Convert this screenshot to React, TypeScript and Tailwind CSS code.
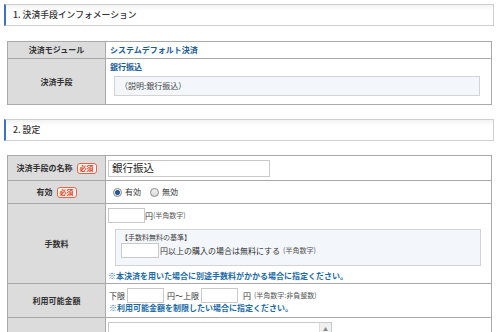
const jp = { fontFamily: '"Noto Sans CJK JP", "Liberation Sans", sans-serif' }

function SectionTitle({ children }: { children: React.ReactNode }) {
  return (
    <div className="ml-[4px] mr-[6px] h-[22px] border border-[#cfcfcf] border-l-[2px] border-l-[#3b74c4] bg-gradient-to-b from-[#f2f2f2] to-white to-[30%] flex items-center pl-[7px] text-[8.8px] text-[#333] font-medium">
      {children}
    </div>
  )
}

function Badge() {
  return (
    <span className="inline-flex items-center h-[11px] px-[2px] ml-[4px] rounded-[3px] border border-[#e0684a] bg-[#fff3ee] text-[#e0452a] text-[7px] leading-none">
      必須
    </span>
  )
}

function Th({ children, h }: { children: React.ReactNode; h: string }) {
  return (
    <td className={`w-[98px] ${h} bg-[#dcdcdc] border border-[#a9a9a9] text-center text-[8px] font-bold text-[#333] align-middle`}>
      {children}
    </td>
  )
}

function Radio({ on }: { on?: boolean }) {
  return (
    <span className="inline-flex items-center justify-center w-[9px] h-[9px] rounded-full border border-[#8a8a8a] bg-gradient-to-b from-[#f4f4f4] to-[#d8d8d8]">
      {on && <span className="w-[5px] h-[5px] rounded-full bg-[#1f5fa8] border border-[#0c3f7a]" />}
    </span>
  )
}

function SmallInput({ w }: { w: string }) {
  return <span className={`inline-block ${w} h-[15px] border border-[#c9c9c9] bg-white align-middle`} />
}

export default function App() {
  return (
    <div className="w-[500px] h-[332px] overflow-hidden bg-white pt-[4px] text-[#333]" style={jp}>
      <SectionTitle>1. 決済手段インフォメーション</SectionTitle>

      <table className="ml-[7px] mt-[15px] w-[485px] border-collapse">
        <tbody>
          <tr>
            <Th h="h-[17px]">決済モジュール</Th>
            <td className="border border-[#a9a9a9] pl-[4px] text-[8px] font-bold text-[#1a5c98]">システムデフォルト決済</td>
          </tr>
          <tr>
            <Th h="h-[46px]">決済手段</Th>
            <td className="border border-[#a9a9a9] px-[4px] align-top pt-[3px]">
              <div className="text-[8px] font-bold text-[#1a5c98] leading-[10px]">銀行振込</div>
              <div className="mt-[4px] ml-[4px] mr-[7px] h-[20px] border border-[#d3d3d3] bg-[#f3f7fb] flex items-center pl-[5px] text-[8px] text-[#444]">
                （説明:銀行振込）
              </div>
            </td>
          </tr>
        </tbody>
      </table>

      <div className="mt-[14px]">
        <SectionTitle>2. 設定</SectionTitle>
      </div>

      <table className="ml-[7px] mt-[14px] w-[485px] border-collapse">
        <tbody>
          <tr>
            <Th h="h-[25px]">
              <span className="inline-flex items-center">決済手段の名称<Badge /></span>
            </Th>
            <td className="border border-[#a9a9a9] pl-[2px]">
              <div className="w-[162px] h-[17px] border border-[#c9c9c9] flex items-center pl-[3px] text-[10.5px] text-[#222]">
                銀行振込
              </div>
            </td>
          </tr>
          <tr>
            <Th h="h-[23px]">
              <span className="inline-flex items-center">有効<Badge /></span>
            </Th>
            <td className="border border-[#a9a9a9] pl-[7px] text-[8px]">
              <span className="inline-flex items-center gap-[3px]">
                <Radio on />
                <span>有効</span>
                <span className="w-[3px]" />
                <Radio />
                <span>無効</span>
              </span>
            </td>
          </tr>
          <tr>
            <Th h="h-[80px]">手数料</Th>
            <td className="border border-[#a9a9a9] pl-[2px] pt-[4px] align-top text-[8px]">
              <div className="flex items-center">
                <SmallInput w="w-[37px]" />
                <span>円</span>
                <span className="text-[7px] text-[#555]">(半角数字)</span>
              </div>
              <div className="mt-[6px] ml-[7px] mr-[10px] h-[37px] border border-[#d3d3d3] bg-[#f3f7fb] pl-[5px] pt-[3px]">
                <div className="text-[7px] leading-[9px] text-[#444]">【手数料無料の基準】</div>
                <div className="flex items-center mt-[1px]">
                  <SmallInput w="w-[38px]" />
                  <span className="ml-[1px]">円以上の購入の場合は無料にする</span>
                  <span className="ml-[3px] text-[7px] text-[#555]">(半角数字)</span>
                </div>
              </div>
              <div className="mt-[5px] font-bold text-[#1a6aa8] leading-[10px]">
                ※本決済を用いた場合に別途手数料がかかる場合に指定ください。
              </div>
            </td>
          </tr>
          <tr>
            <Th h="h-[34px]">利用可能金額</Th>
            <td className="border border-[#a9a9a9] pl-[3px] pt-[4px] align-top text-[8px]">
              <div className="flex items-center">
                <span>下限</span>
                <span className="ml-[2px]"><SmallInput w="w-[37px]" /></span>
                <span className="ml-[3px]">円〜上限</span>
                <span className="ml-[2px]"><SmallInput w="w-[37px]" /></span>
                <span className="ml-[5px]">円</span>
                <span className="ml-[3px] text-[7px] text-[#555]">(半角数字:非負整数)</span>
              </div>
              <div className="font-bold text-[#1a6aa8] leading-[10px]">
                ※利用可能金額を制限したい場合に指定ください。
              </div>
            </td>
          </tr>
          <tr>
            <Th h="h-[40px]">{''}</Th>
            <td className="border border-[#a9a9a9] pl-[2px] pt-[4px] align-top">
              <div className="relative w-[224px] h-[40px] border border-[#c9c9c9]">
                <div className="absolute right-0 top-0 w-[12px] h-[12px] bg-[#f0f0f0] border-l border-[#dddddd] flex items-center justify-center text-[5px] text-[#888]">
                  ▲
                </div>
              </div>
            </td>
          </tr>
        </tbody>
      </table>
    </div>
  )
}
